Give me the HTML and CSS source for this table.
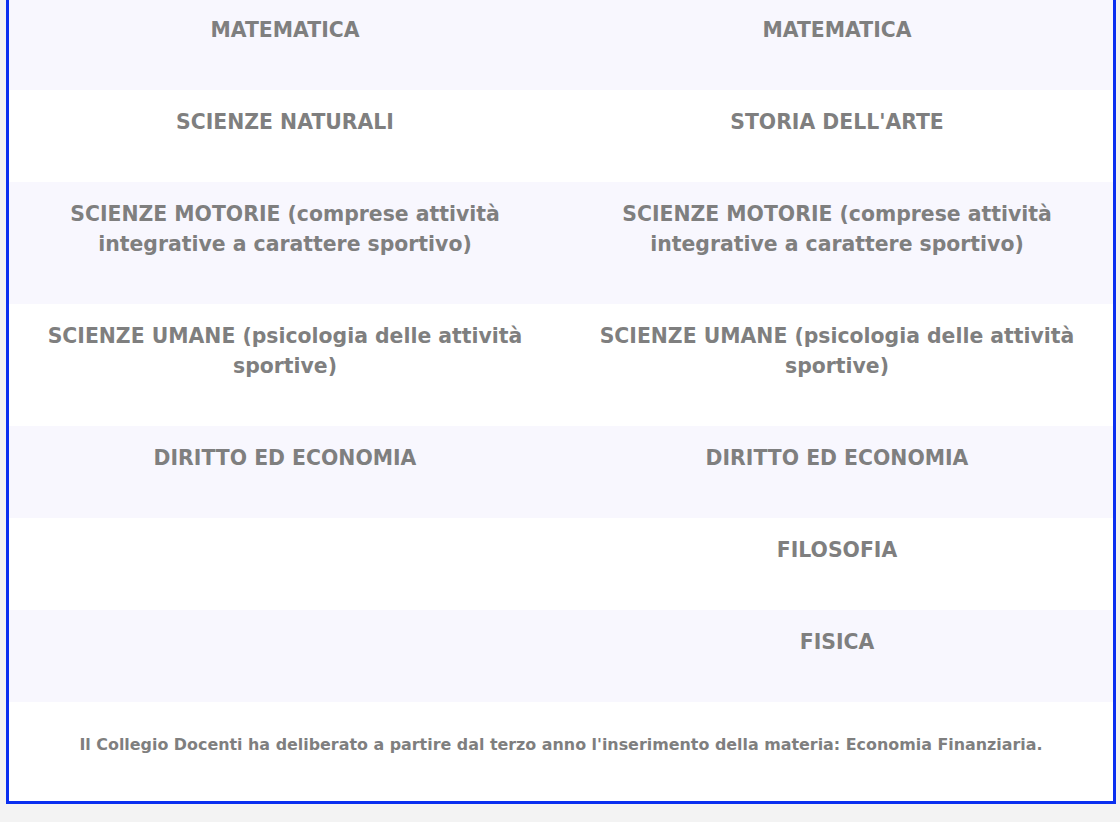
FILE: index.html
```html
<!DOCTYPE html>
<html lang="it">
<head>
<meta charset="utf-8">
<title>Quadro orario</title>
<link rel="stylesheet" href="styles.css">
</head>
<body>
<div class="box">
  <div class="row alt first">
    <div class="cell">MATEMATICA</div>
    <div class="cell">MATEMATICA</div>
  </div>
  <div class="row">
    <div class="cell">SCIENZE NATURALI</div>
    <div class="cell">STORIA DELL'ARTE</div>
  </div>
  <div class="row alt">
    <div class="cell">SCIENZE MOTORIE (comprese attività integrative a carattere sportivo)</div>
    <div class="cell">SCIENZE MOTORIE (comprese attività integrative a carattere sportivo)</div>
  </div>
  <div class="row">
    <div class="cell">SCIENZE UMANE (psicologia delle attività sportive)</div>
    <div class="cell">SCIENZE UMANE (psicologia delle attività sportive)</div>
  </div>
  <div class="row alt">
    <div class="cell">DIRITTO ED ECONOMIA</div>
    <div class="cell">DIRITTO ED ECONOMIA</div>
  </div>
  <div class="row">
    <div class="cell"></div>
    <div class="cell">FILOSOFIA</div>
  </div>
  <div class="row alt">
    <div class="cell"></div>
    <div class="cell">FISICA</div>
  </div>
  <div class="note">Il Collegio Docenti ha deliberato a partire dal terzo anno l'inserimento della materia: Economia Finanziaria.</div>
</div>
</body>
</html>
```
FILE: styles.css
```css
html, body {
  margin: 0;
  padding: 0;
  background: #f3f3f3;
}
body {
  padding: 0 4px 18px 6px;
  font-family: "DejaVu Sans", Verdana, sans-serif;
  color: #7f7f7f;
}
.box {
  background: #ffffff;
  border: 3px solid #0a2ff0;
  border-top: none;
}
.row {
  display: grid;
  grid-template-columns: 1fr 1fr;
  background: #ffffff;
}
.row.alt {
  background: #f8f7fe;
}
.cell {
  padding: 17px 16px 45px;
  text-align: center;
  font-weight: bold;
  font-size: 20.4px;
  line-height: 30px;
}
.row.first .cell {
  padding-top: 15px;
}
.note {
  padding: 33px 16px 46px;
  text-align: center;
  font-weight: bold;
  font-size: 15.9px;
  line-height: 20px;
}
```
